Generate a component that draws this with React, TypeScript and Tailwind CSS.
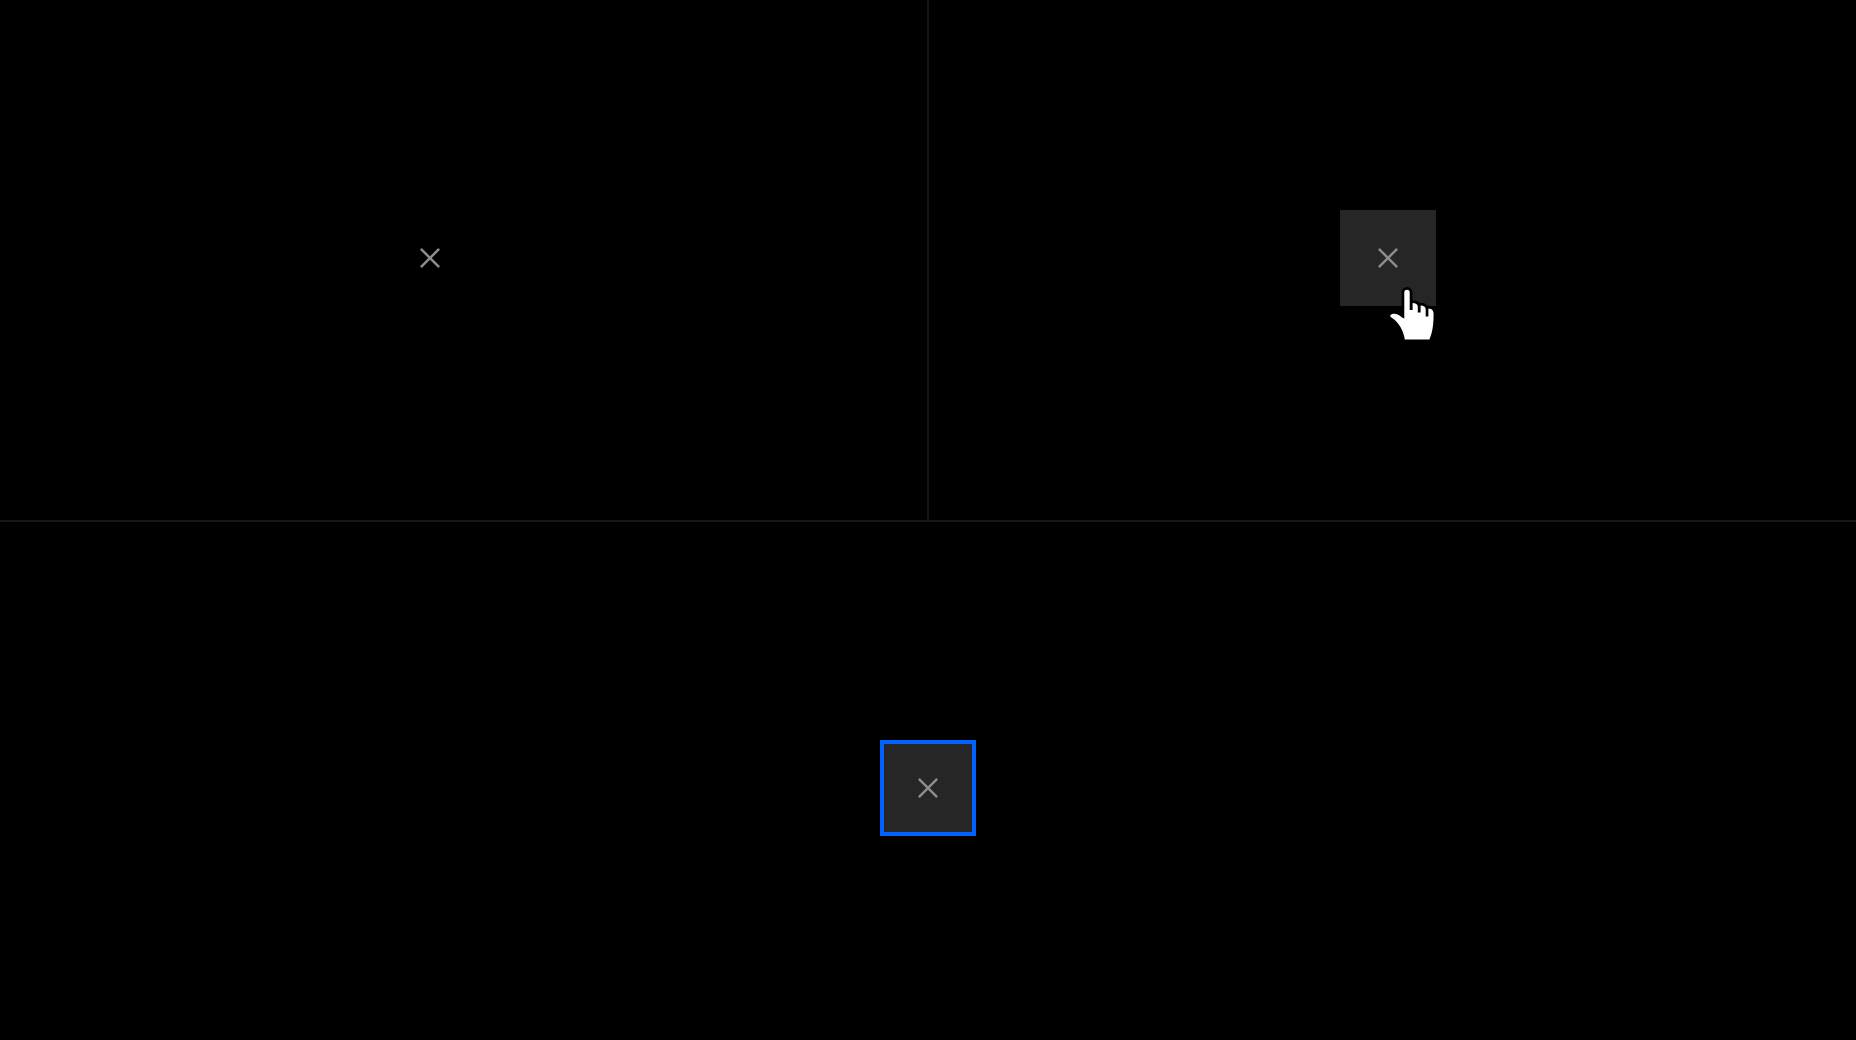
import React from "react";

function CloseIcon() {
  return (
    <svg viewBox="0 0 32 32" className="size-10" fill="#8d8d8d" aria-hidden="true">
      <path d="M24 9.4 22.6 8 16 14.6 9.4 8 8 9.4 14.6 16 8 22.6 9.4 24 16 17.4 22.6 24 24 22.6 17.4 16Z" />
    </svg>
  );
}

function CloseButton({ className = "" }: { className?: string }) {
  return (
    <button
      type="button"
      aria-label="Close"
      className={`flex size-24 items-center justify-center ${className}`}
    >
      <CloseIcon />
    </button>
  );
}

function HandCursor() {
  return (
    <svg
      viewBox="0 0 64 64"
      className="pointer-events-none absolute left-10 top-[70px] size-16"
      aria-hidden="true"
    >
      <path
        d="M24.3 38.5V12.4a2.7 2.7 0 0 1 5.4 0V30H32.6V22.9C35.6 22.9 37.8 24 37.8 26.6V32.6H40.6V25.5C43.6 25.5 45.7 26.8 45.7 29.6V36.6H48.4V28.4C51.8 28.6 53.6 30.2 53.6 34 53.6 44 52.6 52.5 49.4 59.4H24.8C23.6 51 19 42.5 12.5 38.2c-1.8-1.1-2.9-2.2-2-3.2 2.6-2.6 7.8-.9 10.4 1.4 1 .9 2 1.7 3.4 2.1Z"
        fill="#fff"
        stroke="#000"
        strokeWidth="5.4"
        strokeLinejoin="round"
        paintOrder="stroke"
      />
    </svg>
  );
}

export default function App() {
  return (
    <main className="grid min-h-screen grid-rows-[522fr_518fr] bg-black">
      <section className="grid grid-cols-[1fr_2px_1fr] border-b-2 border-[#161616]">
        <div className="flex items-center justify-center pr-[67px] pb-1">
          <CloseButton />
        </div>
        <div className="bg-[#161616]" />
        <div className="flex items-center justify-center pr-[9px] pb-1">
          <div className="relative">
            <CloseButton className="bg-[#262626]" />
            <HandCursor />
          </div>
        </div>
      </section>
      <section className="flex items-center justify-center pt-[14px]">
        <CloseButton className="border-4 border-[#0062ff] bg-[#262626]" />
      </section>
    </main>
  );
}
